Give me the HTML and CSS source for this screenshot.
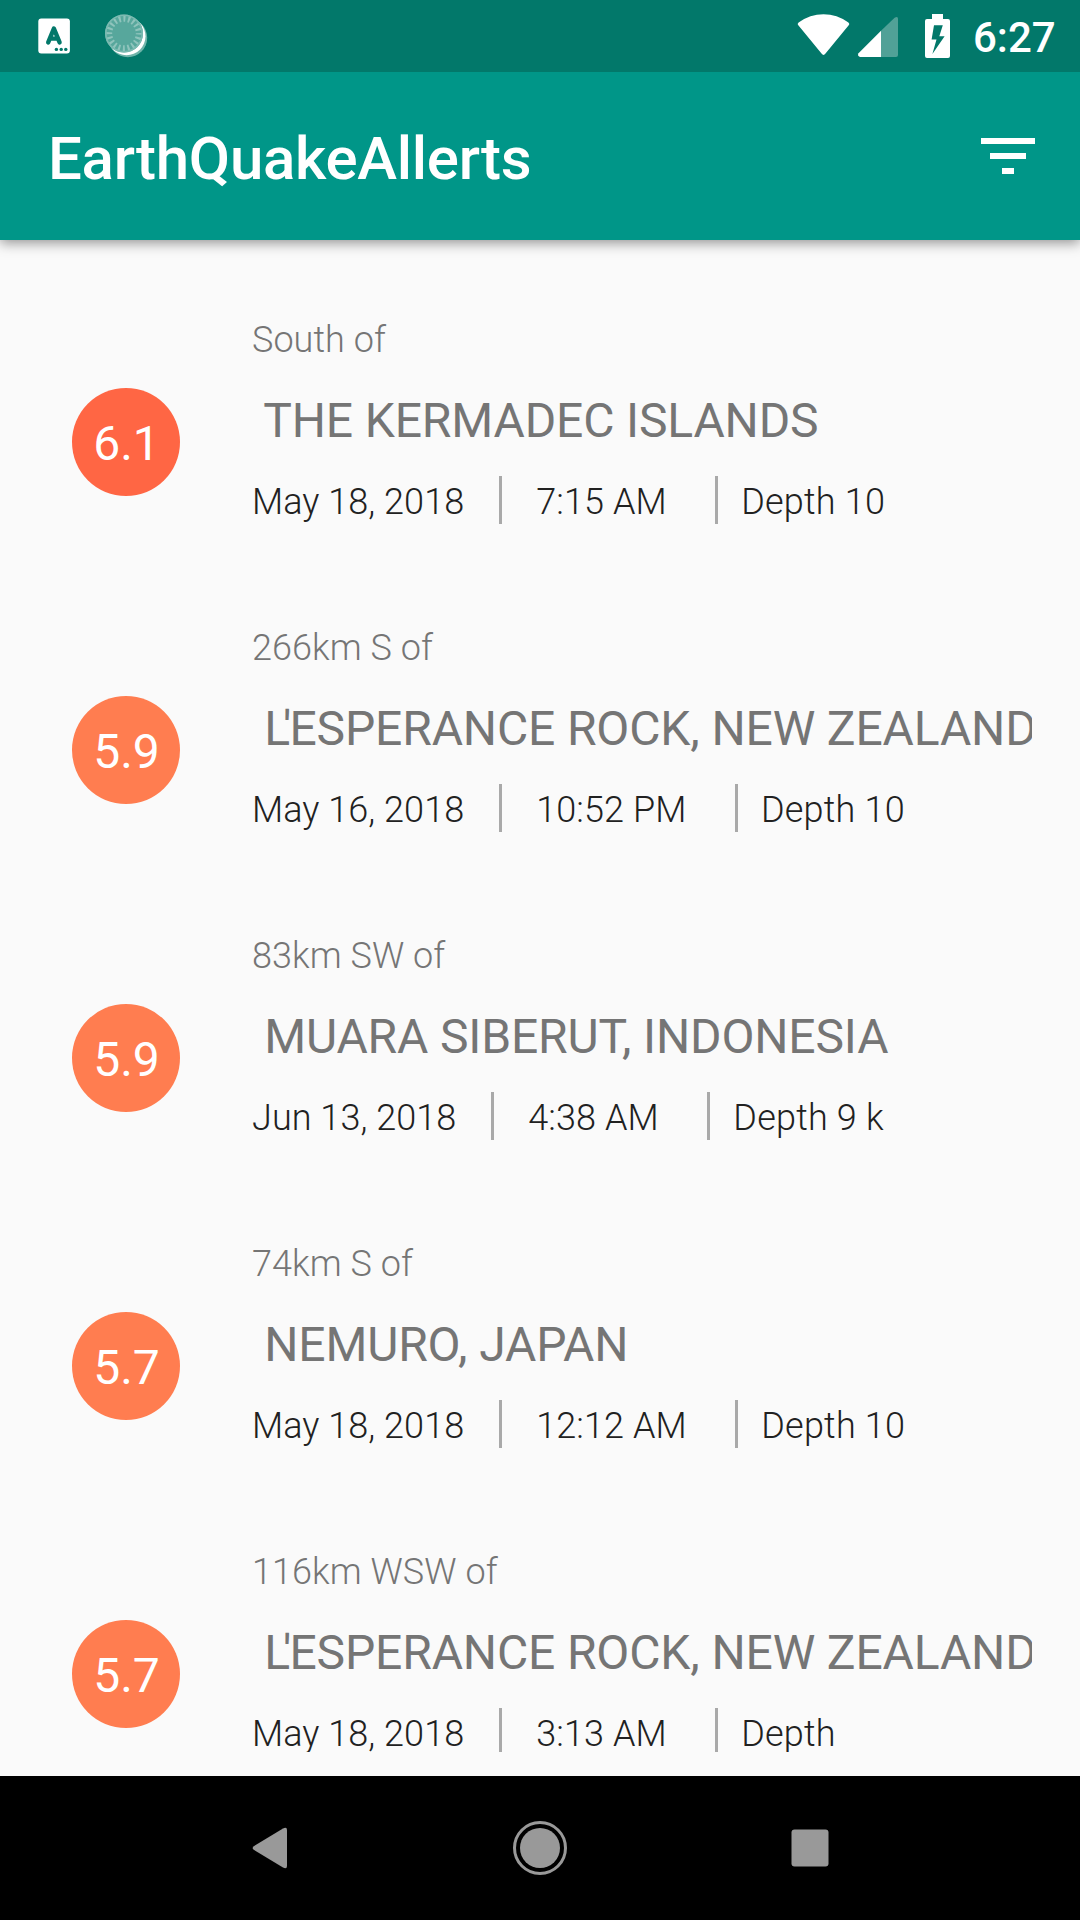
FILE: index.html
```html
<!DOCTYPE html>
<html lang="en">
<head>
<meta charset="utf-8">
<title>EarthQuakeAllerts</title>
<link rel="stylesheet" href="styles.css">
</head>
<body>
<div class="screen">
  <header class="status-bar">
    <svg class="status-left" width="160" height="72" viewBox="0 0 160 72">
      <rect x="38.3" y="18.4" width="31.6" height="35" rx="3" fill="#fff"/>
      <path d="M48.2 42.4 53.9 28.6 59.6 42.4M50.5 38.6h7" fill="none" stroke="#02786a" stroke-width="4.4" stroke-linecap="round" stroke-linejoin="round"/>
      <g fill="#02786a"><circle cx="56.4" cy="49.4" r="1.7"/><circle cx="61.2" cy="49.4" r="1.7"/><circle cx="65.8" cy="49.4" r="1.7"/></g>
      <circle cx="127.8" cy="37.800" r="19.4" fill="#6fb4aa"/>
      <circle cx="126.5" cy="36.300" r="19" fill="#fff"/>
      <circle cx="124" cy="33.5" r="19" fill="#57a79c"/>
      <circle cx="124" cy="33.5" r="14.8" fill="none" stroke="#8fc4bc" stroke-width="6" stroke-dasharray="2 2.649" stroke-dashoffset="1"/>
      <circle cx="124" cy="33.5" r="18.2" fill="none" stroke="#7bbab1" stroke-width="1.6"/>
    </svg>
    <svg class="status-right" width="200" height="72" viewBox="780 0 200 72">
      <path d="M798.3 25.2Q796.8 24 798.6 22.4 810 14.2 823.5 14.2T848.400 22.400Q850.200 24 848.700 25.200L825.500 53.500Q823.500 56.300 821.500 53.500Z" fill="#fff"/>
      <path d="M881 30.800 894.600 17.800Q898 15.800 898 19V55Q898 57 896 57H881Z" fill="#51a197"/>
      <path d="M881 30.800V57H860Q857 56 858.500 53.300Z" fill="#fff"/>
      <path fill-rule="evenodd" d="M932 14h11v5h5q2 0 2 2v35q0 2-2 2h-21q-2 0-2-2V21q0-2 2-2h5ZM934 25.200 931.600 39.500H936.500L932.400 54 944.600 36.200H939.300L942.800 25.200Z" fill="#fff"/>
    </svg>
    <span class="clock">6:27</span>
  </header>
  <div class="app-bar">
    <h1 class="app-title">EarthQuakeAllerts</h1>
    <svg class="filter" width="72" height="72" viewBox="0 0 24 24"><path d="M10 18h4v-2h-4v2zM3 6v2h18V6H3zm3 7h12v-2H6v2z" fill="#fff"/></svg>
  </div>
  <main class="list">
    <article class="quake">
      <div class="magnitude strong">6.1</div>
      <div class="details">
        <div class="offset">South of</div>
        <div class="place"> THE KERMADEC ISLANDS</div>
        <div class="meta"><span class="date">May 18, 2018</span><span class="time">7:15 AM</span><span class="depth">Depth 10</span></div>
      </div>
    </article>
    <article class="quake">
      <div class="magnitude">5.9</div>
      <div class="details">
        <div class="offset">266km S of</div>
        <div class="place"> <span class="kern">L</span><span class="kern-end">'</span>ESPERANCE ROCK, NEW ZEALAND</div>
        <div class="meta"><span class="date">May 16, 2018</span><span class="time">10:52 PM</span><span class="depth">Depth 10</span></div>
      </div>
    </article>
    <article class="quake">
      <div class="magnitude">5.9</div>
      <div class="details">
        <div class="offset">83km SW of</div>
        <div class="place"> MUARA SIBERUT, INDONESIA</div>
        <div class="meta"><span class="date">Jun 13, 2018</span><span class="time">4:38 AM</span><span class="depth">Depth 9 k</span></div>
      </div>
    </article>
    <article class="quake">
      <div class="magnitude">5.7</div>
      <div class="details">
        <div class="offset">74km S of</div>
        <div class="place"> NEMURO, JAPAN</div>
        <div class="meta"><span class="date">May 18, 2018</span><span class="time">12:12 AM</span><span class="depth">Depth 10</span></div>
      </div>
    </article>
    <article class="quake">
      <div class="magnitude">5.7</div>
      <div class="details">
        <div class="offset">116km WSW of</div>
        <div class="place"> <span class="kern">L</span><span class="kern-end">'</span>ESPERANCE ROCK, NEW ZEALAND</div>
        <div class="meta"><span class="date">May 18, 2018</span><span class="time">3:13 AM</span><span class="depth">Depth</span></div>
      </div>
    </article>
  </main>
  <nav class="nav-bar">
    <svg width="60" height="60" viewBox="0 0 60 60"><path d="M13.800 28.200 43 10.500Q47 8.500 47 12V48Q47 51.500 43 49.500L13.800 31.800Q11.500 30 13.800 28.200Z" fill="#999"/></svg>
    <svg width="60" height="60" viewBox="0 0 60 60"><circle cx="30" cy="30" r="25.500" fill="none" stroke="#999" stroke-width="3"/><circle cx="30" cy="30" r="20" fill="#999"/></svg>
    <svg width="60" height="60" viewBox="0 0 60 60"><rect x="11.500" y="11.500" width="37" height="37" rx="3" fill="#999"/></svg>
  </nav>
</div>
</body>
</html>
```
FILE: styles.css
```css
* { box-sizing: border-box; }

body {
  margin: 0;
  background: #fafafa;
  font-family: Roboto, sans-serif;
}

svg { display: block; flex: none; }

.screen {
  display: flex;
  flex-direction: column;
  width: 1080px;
  height: 1920px;
  overflow: hidden;
}

.status-bar {
  display: flex;
  align-items: center;
  flex: none;
  height: 72px;
  background: #02786a;
  color: #fff;
  z-index: 2;
}

.status-right { margin-left: 620px; margin-right: -7px; }

.clock {
  font-size: 42px;
  font-weight: 500;
  line-height: 50px;
  padding-top: 4px;
}

.app-bar {
  display: flex;
  align-items: center;
  justify-content: space-between;
  flex: none;
  height: 168px;
  padding: 0 36px 0 48px;
  background: #009688;
  color: #fff;
  box-shadow: 0 3px 12px rgba(0, 0, 0, 0.42);
  z-index: 1;
}

.app-title {
  margin: 0;
  padding-top: 6px;
  font-size: 60px;
  font-weight: 500;
  line-height: 70px;
  letter-spacing: -0.28px;
}

.list {
  flex: none;
  height: 1512px;
  padding-top: 48px;
  overflow: hidden;
}

.quake {
  display: flex;
  align-items: center;
  height: 308px;
  padding: 0 48px 0 72px;
}

.magnitude {
  flex: none;
  width: 108px;
  height: 108px;
  margin-right: 72px;
  padding-left: 1px;
  border-radius: 50%;
  background: #ff7d50;
  color: #fff;
  font-size: 48px;
  line-height: 112px;
  text-align: center;
}

.magnitude.strong { background: #ff6644; }

.details {
  flex: 1;
  min-width: 0;
  height: 246px;
  font-size: 36px;
  font-weight: 300;
}

.offset { line-height: 42px; color: #757575; letter-spacing: 0.05px; }

.place {
  margin-top: 32px;
  padding-left: 0.4px;
  overflow: hidden;
  color: #757575;
  font-size: 48px;
  font-weight: 400;
  line-height: 56px;
  letter-spacing: -0.14px;
  white-space: pre;
}

/* Tightens the apostrophe against the L before it */
.kern { letter-spacing: -7px; }
.kern-end { letter-spacing: -2px; }

.meta {
  display: flex;
  margin-top: 27px;
  height: 48px;
  line-height: 44px;
  color: #212121;
  white-space: nowrap;
}

.date, .time, .depth { padding-top: 4px; }

.date { padding-right: 35px; letter-spacing: 0.05px; }

.time {
  padding-left: 34px;
  padding-right: 48px;
  border-left: 3px solid #a9a9a9;
  letter-spacing: 0.1px;
}

.depth {
  padding-left: 23.5px;
  border-left: 3px solid #a9a9a9;
  letter-spacing: 0.2px;
}

.nav-bar {
  display: flex;
  justify-content: center;
  align-items: center;
  gap: 210px;
  flex: none;
  height: 144px;
  margin-top: 24px;
  background: #000;
}
```
